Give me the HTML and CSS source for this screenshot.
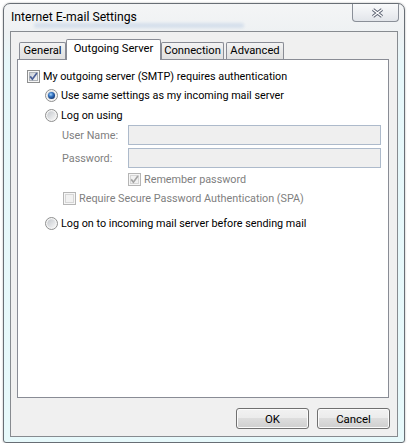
FILE: index.html
```html
<!DOCTYPE html>
<html>
<head>
<meta charset="utf-8">
<link rel="stylesheet" href="styles.css">
</head>
<body>
<svg class="defs" width="0" height="0">
  <defs>
    <linearGradient id="cbIn" x1="0" y1="0" x2="1" y2="1">
      <stop offset="0" stop-color="#c9ced5"/>
      <stop offset="1" stop-color="#f8f8f8"/>
    </linearGradient>
    <linearGradient id="rdIn" x1="0" y1="0" x2="1" y2="1">
      <stop offset="0" stop-color="#c3c7cc"/>
      <stop offset="1" stop-color="#f8f8f8"/>
    </linearGradient>
    <radialGradient id="rdDot" cx="0.4" cy="0.35" r="0.7">
      <stop offset="0" stop-color="#a6d6fb"/>
      <stop offset="0.45" stop-color="#3474c3"/>
      <stop offset="1" stop-color="#0f326c"/>
    </radialGradient>
  </defs>
</svg>

<div class="window">
  <div class="titlebar">
    <div class="ghost"></div>
    <span class="title">Internet E-mail Settings</span>
    <div class="close">
      <svg width="13" height="10" viewBox="0 0 13 10">
        <path d="M2 1.5 L11 8.5 M11 1.5 L2 8.5" stroke="#5b6272" stroke-width="3.4" fill="none"/>
        <path d="M2 1.5 L11 8.5 M11 1.5 L2 8.5" stroke="#ffffff" stroke-width="1.4" fill="none"/>
      </svg>
    </div>
  </div>

  <div class="client">
    <div class="tabs">
      <div class="tab t-general">General</div>
      <div class="tab active t-outgoing">Outgoing Server</div>
      <div class="tab t-connection">Connection</div>
      <div class="tab t-advanced">Advanced</div>
    </div>

    <div class="panel">
      <div class="row r-auth">
        <svg class="cb" viewBox="0 0 13 13">
          <rect x="0.5" y="0.5" width="12" height="12" fill="#f6f6f6" stroke="#8e8f8f"/>
          <rect x="2.5" y="2.5" width="8" height="8" fill="url(#cbIn)" stroke="#adb2b8"/>
          <path d="M3.2 6.4 L5.4 9.2 L9.9 3.1" fill="none" stroke="#4a5f97" stroke-width="1.7"/>
        </svg>
        <span>My outgoing server (SMTP) requires authentication</span>
      </div>
      <div class="row r-same">
        <svg class="rd" viewBox="0 0 13 13">
          <circle cx="6.5" cy="6.5" r="6" fill="#f4f4f4" stroke="#8e8f8f"/>
          <circle cx="6.5" cy="6.5" r="4.3" fill="url(#rdIn)"/>
          <circle cx="6.5" cy="6.5" r="3.5" fill="url(#rdDot)"/>
        </svg>
        <span>Use same settings as my incoming mail server</span>
      </div>
      <div class="row r-logon">
        <svg class="rd" viewBox="0 0 13 13">
          <circle cx="6.5" cy="6.5" r="6" fill="#f4f4f4" stroke="#8e8f8f"/>
          <circle cx="6.5" cy="6.5" r="4.3" fill="url(#rdIn)"/>
        </svg>
        <span>Log on using</span>
      </div>
      <div class="row field r-user">
        <span class="flabel">User Name:</span>
        <div class="input"></div>
      </div>
      <div class="row field r-pass">
        <span class="flabel">Password:</span>
        <div class="input"></div>
      </div>
      <div class="row r-remember">
        <svg class="cb" viewBox="0 0 13 13">
          <rect x="0.5" y="0.5" width="12" height="12" fill="#f6f6f6" stroke="#b5b5b5"/>
          <rect x="2.5" y="2.5" width="8" height="8" fill="#f1f1f1" stroke="#d6d6d6"/>
          <path d="M3.2 6.4 L5.4 9.2 L9.9 3.1" fill="none" stroke="#a4a4a4" stroke-width="1.7"/>
        </svg>
        <span class="dis">Remember password</span>
      </div>
      <div class="row r-spa">
        <svg class="cb" viewBox="0 0 13 13">
          <rect x="0.5" y="0.5" width="12" height="12" fill="#f6f6f6" stroke="#b5b5b5"/>
          <rect x="2.5" y="2.5" width="8" height="8" fill="#f1f1f1" stroke="#d6d6d6"/>
        </svg>
        <span class="dis">Require Secure Password Authentication (SPA)</span>
      </div>
      <div class="row r-before">
        <svg class="rd" viewBox="0 0 13 13">
          <circle cx="6.5" cy="6.5" r="6" fill="#f4f4f4" stroke="#8e8f8f"/>
          <circle cx="6.5" cy="6.5" r="4.3" fill="url(#rdIn)"/>
        </svg>
        <span>Log on to incoming mail server before sending mail</span>
      </div>
    </div>

    <div class="buttons">
      <button class="btn">OK</button>
      <button class="btn">Cancel</button>
    </div>
  </div>
</div>
</body>
</html>
```

FILE: styles.css
```css
html, body {
  margin: 0;
  padding: 0;
}

body {
  background: #ffffff;
  font-family: Roboto, "Noto Sans", sans-serif;
  font-size: 10.8px;
  color: #000000;
}

.defs {
  position: absolute;
  width: 0;
  height: 0;
}

.window {
  margin: 3px 0 0 3px;
  width: 402px;
  height: 440px;
  box-sizing: border-box;
  border: 1px solid #686e75;
  border-radius: 7px 7px 3px 3px;
  background: linear-gradient(#f4f5f6 0, #eef1f3 28px, #e6f7fa 60px, #e7f9fb 100%);
  box-shadow: 0 0 2px rgba(0, 0, 0, 0.35);
  display: flex;
  flex-direction: column;
  overflow: hidden;
}

.titlebar {
  position: relative;
  flex: none;
  height: 27px;
  display: flex;
  align-items: flex-start;
  padding-left: 7px;
  overflow: hidden;
}

.ghost {
  position: absolute;
  left: 30px;
  top: 19px;
  width: 210px;
  height: 5px;
  border-radius: 3px;
  background: rgba(80, 130, 200, 0.16);
  filter: blur(1.5px);
}

.title {
  position: relative;
  margin-top: 5px;
  font-size: 12.2px;
  line-height: 16px;
}

.close {
  margin-left: auto;
  margin-right: 5px;
  width: 47px;
  height: 18px;
  box-sizing: border-box;
  border: 1px solid #8a8f98;
  border-top: none;
  border-radius: 0 0 4px 4px;
  background: linear-gradient(#f9fafb, #eef0f3 50%, #e2e5ea);
  display: flex;
  align-items: center;
  justify-content: center;
}

.close svg {
  margin-left: 3px;
}

.client {
  flex: none;
  margin: 0 6px;
  height: 406px;
  box-sizing: border-box;
  border: 1px solid #878b90;
  background: #f0f0f0;
  padding: 7px 0 7px 6px;
  display: flex;
  flex-direction: column;
}

.tabs {
  position: relative;
  z-index: 1;
  flex: none;
  height: 20px;
  display: flex;
  align-items: flex-end;
  padding-left: 2px;
}

.tab {
  height: 17px;
  box-sizing: border-box;
  border: 1px solid #898c95;
  border-bottom: none;
  border-radius: 2px 2px 0 0;
  background: linear-gradient(#f4f4f4, #e8e8e8 50%, #e0e0e0);
  font-size: 11.2px;
  line-height: 16px;
  text-align: center;
  white-space: nowrap;
}

.tab.active {
  height: 21px;
  margin-bottom: -1px;
  padding-top: 1px;
  background: #ffffff;
}

.t-general { width: 47px; }
.t-outgoing { width: 95px; }
.t-connection { width: 63px; }
.t-advanced { width: 58px; margin-left: 2px; }

.panel {
  flex: none;
  margin-right: 8px;
  height: 339px;
  box-sizing: border-box;
  border: 1px solid #898c95;
  background: #ffffff;
  display: flex;
  flex-direction: column;
}

.row {
  display: flex;
  align-items: center;
  gap: 3px;
  height: 19px;
  line-height: 16px;
  white-space: nowrap;
}

.cb, .rd {
  flex: none;
  width: 13px;
  height: 13px;
}

.r-auth { margin-top: 7px; padding-left: 9px; }
.r-same { padding-left: 27px; }
.r-logon { margin-top: 1px; padding-left: 27px; }

.field {
  height: 20px;
  align-items: flex-start;
  gap: 0;
  padding-left: 44px;
}

.flabel {
  width: 66px;
  margin-top: 3px;
  color: #808080;
}

.r-pass { margin-top: 3px; }

.input {
  width: 253px;
  height: 20px;
  box-sizing: border-box;
  border: 1px solid #adbacb;
  background: #efefef;
}

.r-remember { margin-top: 2px; padding-left: 110px; }
.r-spa { padding-left: 45px; }
.r-before { margin-top: 6px; padding-left: 27px; }

.dis {
  color: #808080;
}

.buttons {
  flex: none;
  display: flex;
  justify-content: flex-end;
  gap: 8px;
  margin-top: 10px;
  margin-right: 7px;
}

.btn {
  width: 73px;
  height: 21px;
  padding: 0;
  font: inherit;
  font-size: 11.4px;
  color: #000000;
  line-height: 18px;
  border: 1px solid #707070;
  border-radius: 3px;
  background: linear-gradient(#f2f2f2, #ebebeb 50%, #dddddd 50%, #cfcfcf);
  box-shadow: inset 0 0 0 1px #fbfbfb;
}
```
